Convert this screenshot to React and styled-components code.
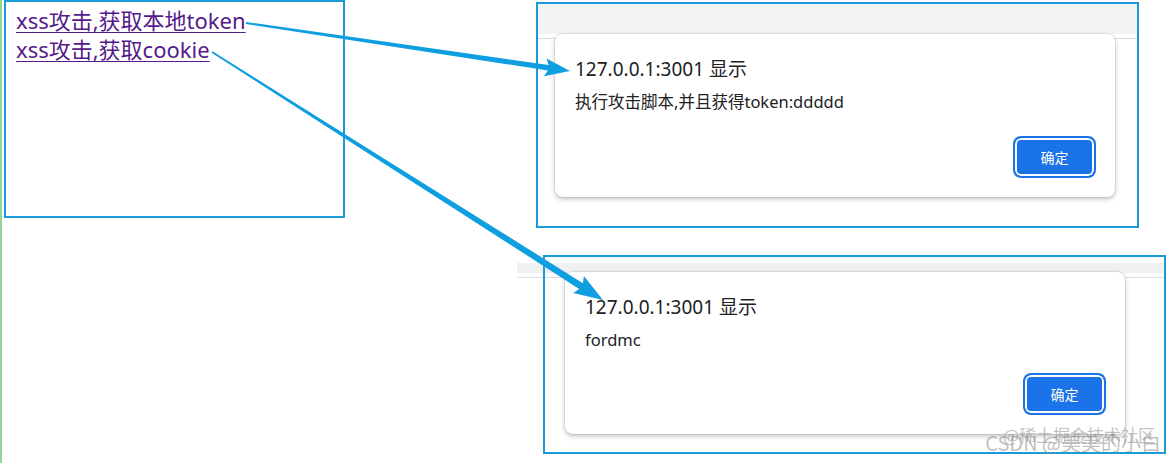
import React from "react";
import styled, { createGlobalStyle } from "styled-components";

const Global = createGlobalStyle`
  html, body { margin: 0; padding: 0; background: #fff; }
  body { width: 1175px; height: 463px; overflow: hidden; }
`;

const FRAME = "#1a9bd8";
const ARROW = "#0f9fe0";
const UI_FONT = `"Noto Sans", "Noto Sans CJK SC", sans-serif`;

const Canvas = styled.div`
  position: relative;
  width: 1175px;
  height: 463px;
  box-sizing: border-box;
  border-left: 2px solid #96d396;
  display: flex;
  align-items: flex-start;
  font-family: ${UI_FONT};
`;

const LinkPanel = styled.div`
  box-sizing: border-box;
  width: 341px;
  height: 218px;
  margin-left: 2px;
  border: 2px solid ${FRAME};
  padding: 4px 0 0 10px;
  display: flex;
  flex-direction: column;
  align-items: flex-start;
`;

const DemoLink = styled.a`
  font-size: 22px;
  line-height: 29px;
  color: #551a8b;
  text-decoration: underline;
  text-underline-offset: 3px;
  text-decoration-thickness: 1px;
  letter-spacing: 0;
`;

const ShotColumn = styled.div`
  display: flex;
  flex-direction: column;
  align-items: flex-start;
  margin-left: 191px;
`;

const ShotRow = styled.div`
  display: flex;
  align-items: flex-start;
  margin-top: ${(p) => p.$top}px;
  margin-left: ${(p) => p.$left || 0}px;
`;

const Stub = styled.div`
  width: 26px;
  height: 24px;
  background: linear-gradient(
    to bottom,
    #fff 0 8px,
    #eef0f1 8px 18px,
    #fff 18px 22px,
    #dadce0 22px 23px,
    transparent 23px
  );
`;

const Shot = styled.div`
  box-sizing: border-box;
  width: ${(p) => p.$w}px;
  height: ${(p) => p.$h}px;
  border: 2px solid ${FRAME};
  background: ${(p) => p.$bg};
  padding: ${(p) => p.$pad};
`;

const Dialog = styled.div`
  box-sizing: border-box;
  width: 560px;
  height: ${(p) => p.$h}px;
  background: #fff;
  border-radius: 8px;
  box-shadow: 0 0 0 1px rgba(0, 0, 0, 0.06), 0 2px 5px rgba(0, 0, 0, 0.25);
  padding: 23px 19px 19px 20px;
  display: flex;
  flex-direction: column;
  color: #202124;
`;

const DialogTitle = styled.div`
  font-size: 19px;
  line-height: 25px;
`;

const DialogBody = styled.div`
  margin-top: 8px;
  font-size: 16.5px;
  line-height: 23px;
`;

const ButtonRow = styled.div`
  margin-top: auto;
  display: flex;
  justify-content: flex-end;
`;

const OkButton = styled.button`
  box-sizing: border-box;
  width: 83px;
  height: 42px;
  border-radius: 8px;
  border: 2px solid #1a73e8;
  box-shadow: inset 0 0 0 2px #fff;
  background: #1a73e8;
  color: #fff;
  font-family: ${UI_FONT};
  font-size: 14px;
  padding: 0;
`;

const Overlay = styled.svg`
  position: absolute;
  left: -2px;
  top: 0;
  pointer-events: none;
`;

const Watermark = styled.div`
  position: absolute;
  right: ${(p) => p.$right}px;
  bottom: ${(p) => p.$bottom}px;
  font-size: ${(p) => p.$size}px;
  line-height: 1;
  color: rgba(140, 140, 140, 0.55);
  white-space: nowrap;
  font-family: "Noto Sans CJK SC", sans-serif;
`;

function arrowPoints(ax, ay, tx, ty, w0, w1, headLen, headHalf) {
  const dx = tx - ax;
  const dy = ty - ay;
  const len = Math.hypot(dx, dy);
  const ux = dx / len;
  const uy = dy / len;
  const nx = -uy;
  const ny = ux;
  const bx = tx - headLen * ux;
  const by = ty - headLen * uy;
  const pts = [
    [ax + nx * w0, ay + ny * w0],
    [bx + nx * w1, by + ny * w1],
    [bx + nx * headHalf - ux * 3, by + ny * headHalf - uy * 3],
    [tx, ty],
    [bx - nx * headHalf - ux * 3, by - ny * headHalf - uy * 3],
    [bx - nx * w1, by - ny * w1],
    [ax - nx * w0, ay - ny * w0],
  ];
  return pts.map((p) => p.map((v) => v.toFixed(1)).join(",")).join(" ");
}

function AlertDialog({ height, body }) {
  return (
    <Dialog $h={height}>
      <DialogTitle>127.0.0.1:3001 显示</DialogTitle>
      <DialogBody>{body}</DialogBody>
      <ButtonRow>
        <OkButton>确定</OkButton>
      </ButtonRow>
    </Dialog>
  );
}

export default function App() {
  return (
    <>
      <Global />
      <Canvas>
        <LinkPanel>
          <DemoLink href="#">xss攻击,获取本地token</DemoLink>
          <DemoLink href="#">xss攻击,获取cookie</DemoLink>
        </LinkPanel>

        <ShotColumn>
          <ShotRow $top={2}>
            <Shot
              $w={603}
              $h={226}
              $pad="30px 0 0 17px"
              $bg="linear-gradient(to bottom, #f1f3f4 0 30px, #fff 30px 34px, #dadce0 34px 35px, #fff 35px)"
            >
              <AlertDialog height={163} body="执行攻击脚本,并且获得token:ddddd" />
            </Shot>
          </ShotRow>
          <ShotRow $top={27} $left={-19}>
            <Stub />
            <Shot
              $w={623}
              $h={199}
              $pad="15px 0 0 20px"
              $bg="linear-gradient(to bottom, #fff 0 6px, #eef0f1 6px 16px, #fff 16px 20px, #dadce0 20px 21px, #fff 21px)"
            >
              <AlertDialog height={162} body="fordmc" />
            </Shot>
          </ShotRow>
        </ShotColumn>

        <Overlay width="1175" height="463" viewBox="0 0 1175 463">
          <polygon fill={ARROW} points={arrowPoints(246, 23, 570, 71, 1, 2.8, 22, 9)} />
          <polygon fill={ARROW} points={arrowPoints(212, 52, 603, 300, 1, 3.4, 26, 10)} />
        </Overlay>

        <Watermark $right={20} $bottom={20} $size={17}>@稀土掘金技术社区</Watermark>
        <Watermark $right={14} $bottom={10} $size={20}>CSDN @美美的小白</Watermark>
      </Canvas>
    </>
  );
}
